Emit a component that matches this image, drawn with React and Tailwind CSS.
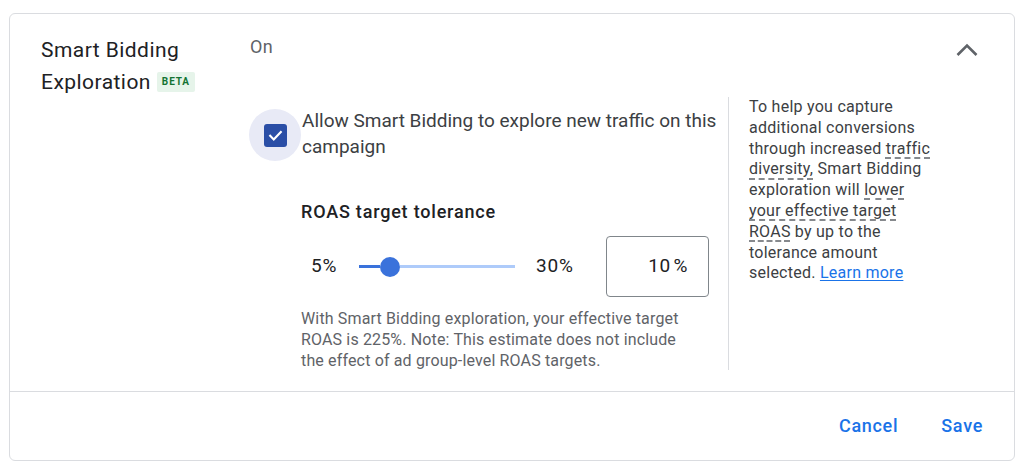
import React from "react";

export default function App() {
  return (
    <div className="bg-white w-[1024px] h-[462px] pt-[13px] px-[9px] overflow-hidden" style={{ fontFamily: "Roboto, 'Noto Sans', sans-serif" }}>
      <div className="border border-[#dadce0] rounded-[6px] h-[448px] flex flex-col">
        <div className="h-[377px] flex pl-[31px]">
          <div className="w-[209px] pt-[20px] text-[21px] leading-[32px] tracking-[0.45px] text-[#202124]">
            <div>Smart Bidding</div>
            <div className="flex items-center">
              <span>Exploration</span>
              <span className="ml-[6px] bg-[#e6f4ea] text-[#137333] text-[10px] leading-[20px] font-bold tracking-[0.9px] px-[5px] rounded-[2px]">BETA</span>
            </div>
          </div>
          <div className="flex flex-col pt-[21px]">
            <div className="text-[18px] leading-[24px] tracking-[0.4px] text-[#5f6368]">On</div>
            <div className="flex mt-[38px]">
              <div className="w-[478px] flex flex-col">
                <div className="flex items-start mt-[11px]">
                  <div className="w-[52px] h-[52px] -ml-[1px] mt-[1px] rounded-full bg-[#e8eaf6] flex items-center justify-center shrink-0">
                    <div className="w-[23px] h-[23px] rounded-[3px] bg-[#2a4ea6] flex items-center justify-center">
                      <svg width="17" height="17" viewBox="0 0 24 24">
                        <path d="M4.5 12.5l5 5L19.5 7" fill="none" stroke="white" strokeWidth="3" strokeLinecap="square" />
                      </svg>
                    </div>
                  </div>
                  <div className="ml-[1px] w-[420px] text-[19px] leading-[26px] text-[#3c4043]">
                    Allow Smart Bidding to explore new traffic on this campaign
                  </div>
                </div>
                <div className="ml-[51px] mt-[39px] text-[18px] leading-[24px] tracking-[0.8px] font-medium text-[#202124]">
                  ROAS target tolerance
                </div>
                <div className="mt-[12px] h-[61px] flex items-center">
                  <span className="ml-[61px] w-[48px] text-[19px] tracking-[0.8px] text-[#202124]">5%</span>
                  <div className="w-[156px] h-[20px] flex items-center">
                    <div className="w-[21px] h-[3px] bg-[#3a72db]" />
                    <div className="w-[20px] h-[20px] rounded-full bg-[#3a72db] shrink-0" />
                    <div className="flex-1 h-[3px] bg-[#aecbfa]" />
                  </div>
                  <span className="ml-[21px] w-[70px] text-[19px] tracking-[0.8px] text-[#202124]">30%</span>
                  <div className="w-[103px] h-[61px] border border-[#80868b] rounded-[4px] flex items-center justify-end pr-[20px] text-[19px] tracking-[0.5px] text-[#202124]">
                    10<span className="ml-[3px]">%</span>
                  </div>
                </div>
                <div className="ml-[51px] mt-[11px] w-[399px] text-[16px] leading-[21px] tracking-[0.15px] text-[#5f6368]">
                  With Smart Bidding exploration, your effective target ROAS is 225%. Note: This estimate does not include the effect of ad group-level ROAS targets.
                </div>
              </div>
              <div className="w-px h-[273px] bg-[#dadce0]" />
              <div className="pl-[20px] w-[204px] text-[16px] leading-[20.8px] tracking-[0.25px] text-[#3c4043]">
                To help you capture additional conversions through increased{" "}
                <span className="underline decoration-dashed decoration-[#5f6368] underline-offset-[4px]">traffic diversity,</span>{" "}
                Smart Bidding exploration will{" "}
                <span className="underline decoration-dashed decoration-[#5f6368] underline-offset-[4px]">lower your effective target ROAS</span>{" "}
                by up to the tolerance amount selected.{" "}
                <span className="text-[#1a73e8] underline underline-offset-[2px]">Learn more</span>
              </div>
            </div>
          </div>
          <div className="ml-auto pt-[29px] pr-[36px]">
            <svg width="22" height="14" viewBox="0 0 22 14">
              <path d="M1.5 12L11 2.5 20.5 12" fill="none" stroke="#5f6368" strokeWidth="2.6" />
            </svg>
          </div>
        </div>
        <div className="flex-1 border-t border-[#dadce0] flex items-center justify-end pr-[31px] gap-[43px] pb-[1px] text-[18px] tracking-[0.7px] font-medium text-[#1a73e8]">
          <span>Cancel</span>
          <span>Save</span>
        </div>
      </div>
    </div>
  );
}
